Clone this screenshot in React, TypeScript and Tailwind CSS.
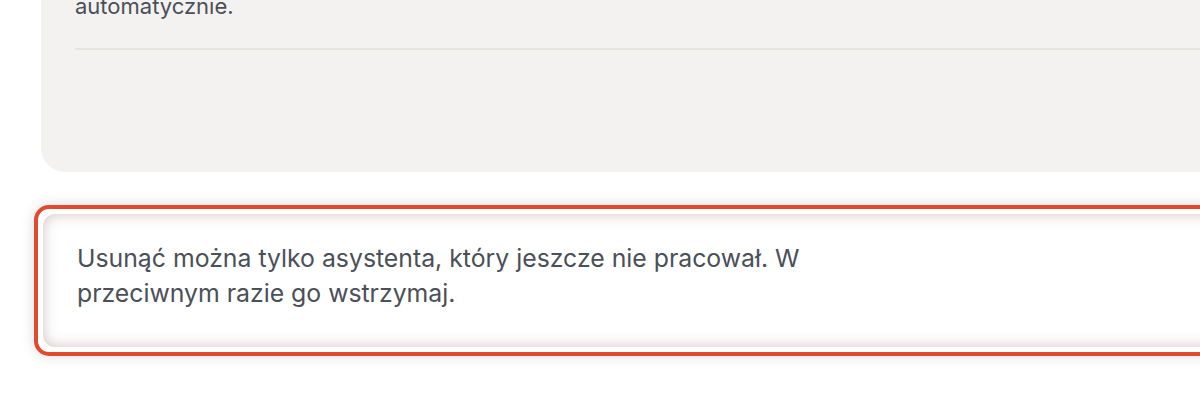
export default function App() {
  return (
    <div className="w-[1200px] h-[400px] overflow-hidden bg-white font-['Inter','Noto_Sans',sans-serif]">
      {/* upper settings card, cut by the top of the viewport */}
      <div className="ml-[41px] -mt-[11px] w-[1300px] rounded-b-[24px] bg-[#f3f2f0] px-[34px] pb-[122px]">
        <p className="text-[22px] leading-[35px] text-[#4b4f58]">automatycznie.</p>
        <div className="mt-[24px] h-[2px] bg-[#e6e6e1]" />
      </div>

      {/* highlighted notice */}
      <div className="ml-[34px] mt-[33px] w-[1300px] rounded-[15px] border-4 border-[#e04a2f] bg-white p-[5px] shadow-[0_0_14px_rgba(0,0,0,0.14)]">
        <div className="rounded-[12px] bg-white pl-[34px] pt-[27px] pb-[36px] shadow-[inset_0_0_14px_rgba(140,95,95,0.38)]">
          <p className="max-w-[780px] text-[24.8px] leading-[35px] text-[#4b4f58]">
            Usunąć można tylko asystenta, który jeszcze nie pracował. W przeciwnym razie go wstrzymaj.
          </p>
        </div>
      </div>
    </div>
  );
}
